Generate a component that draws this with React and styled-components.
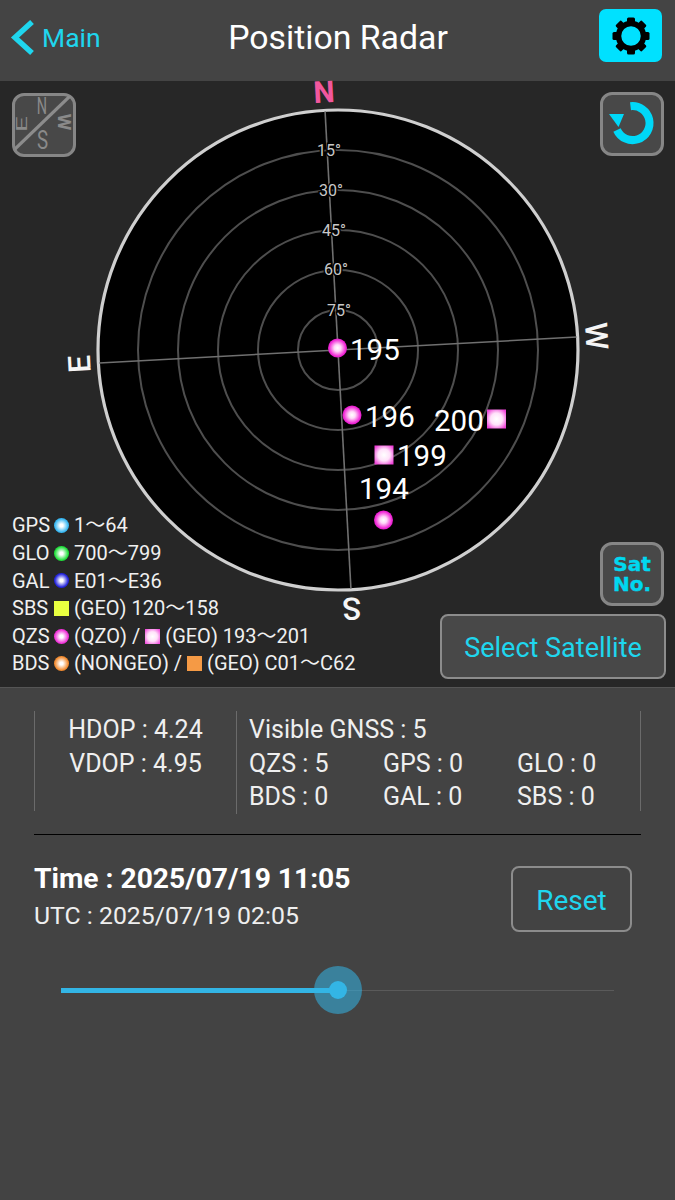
import React from "react";
import styled, { createGlobalStyle } from "styled-components";

const CYAN = "#1fd6ee";
const FONT = `Roboto, "Noto Sans CJK JP", sans-serif`;

const GlobalStyle = createGlobalStyle`
    html, body {
        margin: 0;
        padding: 0;
        background: #434343;
    }
    body {
        font-family: ${FONT};
        color: #f5f5f5;
    }
`;

// radar geometry, in svg units
const C = 269;
const TILT = -3.1;
const RINGS = [40, 80, 120, 160, 200];
const ELEVATIONS = [
    { label: "15°", x: 260, y: 69 },
    { label: "30°", x: 262, y: 109 },
    { label: "45°", x: 265, y: 149 },
    { label: "60°", x: 267, y: 188 },
    { label: "75°", x: 270, y: 229 },
];
const COMPASS = [
    { label: "N", angle: 0, color: "#f2579d", weight: 700, size: 30 },
    { label: "W", angle: 90, color: "#f5f5f5", weight: 500, size: 31 },
    { label: "S", angle: 180, color: "#f5f5f5", weight: 500, size: 31 },
    { label: "E", angle: 270, color: "#f5f5f5", weight: 500, size: 31 },
];
// x/y are the marker, tx/ty where the number starts
const SATS = [
    { id: 195, kind: "dot", x: 268.5, y: 267, tx: 281, ty: 279 },
    { id: 196, kind: "dot", x: 283, y: 334, tx: 296, ty: 346 },
    { id: 200, kind: "square", x: 427.5, y: 338, tx: 365, ty: 350 },
    { id: 199, kind: "square", x: 315, y: 374, tx: 328, ty: 385 },
    { id: 194, kind: "dot", x: 314.5, y: 439, tx: 290, ty: 418 },
];

const Radar = () => (
    <RadarSvg viewBox="0 0 538 538">
        <defs>
            <radialGradient id="qzs">
                <stop offset="0%" stopColor="#ffffff" />
                <stop offset="35%" stopColor="#ffd8f8" />
                <stop offset="85%" stopColor="#f22fd8" />
                <stop offset="100%" stopColor="#e018c8" />
            </radialGradient>
            <radialGradient id="qzsGeo" r="0.62">
                <stop offset="0%" stopColor="#ffffff" />
                <stop offset="50%" stopColor="#ffe2fa" />
                <stop offset="100%" stopColor="#f040d8" />
            </radialGradient>
        </defs>
        <circle cx={C} cy={C} r="240" fill="#000" stroke="#cfcfcf" strokeWidth="3.2" />
        {RINGS.map((r) => (
            <circle key={r} cx={C} cy={C} r={r} fill="none" stroke="#4e4e4e" strokeWidth="2" />
        ))}
        <g transform={`rotate(${TILT} ${C} ${C})`}>
            <line x1={C} y1={C - 239} x2={C} y2={C + 239} stroke="#707070" strokeWidth="1.6" />
            <line x1={C - 239} y1={C} x2={C + 239} y2={C} stroke="#707070" strokeWidth="1.6" />
        </g>
        {ELEVATIONS.map((e) => (
            <ElevationLabel key={e.label} x={e.x} y={e.y}>
                {e.label}
            </ElevationLabel>
        ))}
        {COMPASS.map((d) => (
            <g key={d.label} transform={`rotate(${TILT + d.angle} ${C} ${C})`}>
                <CompassLabel x={C} y={C - 248} fill={d.color} fontWeight={d.weight} fontSize={d.size}>
                    {d.label}
                </CompassLabel>
            </g>
        ))}
        {SATS.map((s) =>
            s.kind === "dot" ? (
                <circle key={s.id} cx={s.x} cy={s.y} r="9.5" fill="url(#qzs)" />
            ) : (
                <rect key={s.id} x={s.x - 9.5} y={s.y - 9.5} width="19" height="19" fill="url(#qzsGeo)" />
            )
        )}
        {SATS.map((s) => (
            <SatLabel key={s.id} x={s.tx} y={s.ty}>
                {s.id}
            </SatLabel>
        ))}
    </RadarSvg>
);

const CompassIcon = () => (
    <svg width="58" height="58" viewBox="0 0 58 58">
        <g fill="#8a8a8a" fontFamily="Roboto, sans-serif" textAnchor="middle">
            <text transform="translate(27 18) scale(0.6 1)" fontSize="24">N</text>
            <text transform="translate(27.5 53) scale(0.75 1)" fontSize="25">S</text>
            <text transform="translate(12 28) rotate(-90) scale(2 1)" fontSize="14">E</text>
            <text transform="translate(43 26) rotate(90)" fontSize="19" fontWeight="700">W</text>
        </g>
        <line x1="-2" y1="55" x2="55" y2="0" stroke="#8c8c8c" strokeWidth="3.2" />
    </svg>
);

const RotateIcon = () => (
    <svg width="58" height="58" viewBox="0 0 58 58">
        <path d="M27.5 11.2 A17 17 0 1 1 14 35" fill="none" stroke="#00d8f8" strokeWidth="8" />
        <path d="M6 19 L21 19 L15.5 32 Z" fill="#00d8f8" />
    </svg>
);

const GearIcon = () => (
    <svg width="38" height="38" viewBox="0 0 38 38">
        {[0, 45, 90, 135, 180, 225, 270, 315].map((a) => (
            <rect key={a} x="15" y="0.5" width="8" height="8" rx="1.5" fill="#000" transform={`rotate(${a} 19 19)`} />
        ))}
        <circle cx="19" cy="19" r="12.5" fill="none" stroke="#000" strokeWidth="5.5" />
    </svg>
);

const LEGEND = [
    { name: "GPS", color: "#35b6f2", text: "1～64" },
    { name: "GLO", color: "#1fe03a", text: "700～799" },
    { name: "GAL", color: "#2222dd", text: "E01～E36" },
    { name: "SBS", color: "#e8ff40", square: true, text: "(GEO) 120～158" },
    { name: "QZS", color: "#f030d8", text: "(QZO) /", second: "#f030d8", rest: "(GEO) 193～201" },
    { name: "BDS", color: "#f28a2e", text: "(NONGEO) /", second: "#f59a45", rest: "(GEO) C01～C62" },
];

export default function App() {
    return (
        <>
            <GlobalStyle />
            <Page>
                <Header>
                    <BackLink>
                        <svg width="24" height="38" viewBox="0 0 24 38">
                            <polyline points="22,3 5,18.5 22,34" fill="none" stroke={CYAN} strokeWidth="5.5" />
                        </svg>
                        Main
                    </BackLink>
                    <Title>Position Radar</Title>
                    <SettingsButton>
                        <GearIcon />
                    </SettingsButton>
                </Header>

                <RadarPanel>
                    <Radar />
                    <IconButton $left="12px" $top="12px">
                        <CompassIcon />
                    </IconButton>
                    <IconButton $right="11px" $top="11px">
                        <RotateIcon />
                    </IconButton>
                    <IconButton $right="11px" $top="461px">
                        <SatNo>
                            <div>Sat</div>
                            <div>No.</div>
                        </SatNo>
                    </IconButton>
                    <Legend>
                        {LEGEND.map((row) => (
                            <LegendRow key={row.name}>
                                <LegendName>{row.name}</LegendName>
                                <Marker $color={row.color} $square={row.square} />
                                <span>{row.text}</span>
                                {row.second && <SecondMarker $color={row.second} $glow={row.name === "QZS"} />}
                                {row.rest && <span>{row.rest}</span>}
                            </LegendRow>
                        ))}
                    </Legend>
                    <SelectButton>Select Satellite</SelectButton>
                </RadarPanel>

                <Details>
                    <Stats>
                        <DopColumn>
                            <div>HDOP : 4.24</div>
                            <div>VDOP : 4.95</div>
                        </DopColumn>
                        <GnssColumn>
                            <GnssTotal>Visible GNSS : 5</GnssTotal>
                            <div>QZS : 5</div>
                            <div>GPS : 0</div>
                            <div>GLO : 0</div>
                            <div>BDS : 0</div>
                            <div>GAL : 0</div>
                            <div>SBS : 0</div>
                        </GnssColumn>
                    </Stats>
                    <Divider />
                    <TimeRow>
                        <div>
                            <LocalTime>Time : 2025/07/19 11:05</LocalTime>
                            <UtcTime>UTC : 2025/07/19 02:05</UtcTime>
                        </div>
                        <ResetButton>Reset</ResetButton>
                    </TimeRow>
                    <Slider>
                        <SliderFill style={{ width: "50%" }} />
                        <SliderHalo style={{ left: "50%" }} />
                        <SliderThumb style={{ left: "50%" }} />
                    </Slider>
                </Details>
            </Page>
        </>
    );
}

const Page = styled.div`
    width: 675px;
    height: 1200px;
    overflow: hidden;
    background: #434343;
`;

const Header = styled.header`
    height: 81px;
    box-sizing: border-box;
    padding: 0 13px 6px 10px;
    display: grid;
    grid-template-columns: 1fr auto 1fr;
    align-items: center;
    background: #444444;
`;

const BackLink = styled.div`
    display: flex;
    align-items: center;
    gap: 8px;
    font-size: 26.5px;
    color: ${CYAN};
`;

const Title = styled.h1`
    margin: 0;
    padding-left: 4px;
    font-size: 33.8px;
    font-weight: 400;
    color: #ffffff;
`;

const SettingsButton = styled.div`
    justify-self: end;
    align-self: start;
    width: 63px;
    height: 53px;
    margin-top: 9px;
    border-radius: 7px;
    background: #00e1ff;
    display: flex;
    align-items: center;
    justify-content: center;
`;

const RadarPanel = styled.section`
    position: relative;
    height: 606px;
    display: flex;
    justify-content: center;
    align-items: flex-start;
    background: #272727;
`;

const RadarSvg = styled.svg`
    display: block;
    width: 538px;
    height: 538px;
    overflow: visible;
    font-family: Roboto, sans-serif;
`;

const ElevationLabel = styled.text`
    font-size: 16px;
    fill: #c8c8c8;
    text-anchor: middle;
    dominant-baseline: central;
    paint-order: stroke;
    stroke: #000;
    stroke-width: 3px;
`;

const CompassLabel = styled.text`
    text-anchor: middle;
`;

const SatLabel = styled.text`
    font-size: 29.5px;
    fill: #ffffff;
`;

const IconButton = styled.div`
    position: absolute;
    top: ${(props) => props.$top};
    left: ${(props) => props.$left || "auto"};
    right: ${(props) => props.$right || "auto"};
    width: 58px;
    height: 58px;
    border: 3px solid #868686;
    border-radius: 12px;
    background: #484848;
    display: flex;
    align-items: center;
    justify-content: center;
`;

const SatNo = styled.div`
    font-family: "DejaVu Sans", sans-serif;
    font-weight: 700;
    font-size: 20px;
    line-height: 20px;
    text-align: center;
    color: #00d8f0;
    -webkit-text-stroke: 0.4px #00d8f0;
`;

const Legend = styled.div`
    position: absolute;
    left: 12px;
    bottom: 9px;
    font-size: 20px;
    line-height: 27.6px;
    color: #f0f0f0;
`;

const LegendRow = styled.div`
    display: flex;
    align-items: center;
    gap: 5px;
    white-space: nowrap;
`;

const LegendName = styled.span`
    width: 37px;
`;

const Marker = styled.i`
    display: block;
    flex: none;
    width: 15px;
    height: 15px;
    margin-top: -1px;
    border-radius: ${(props) => (props.$square ? "0" : "50%")};
    background: ${(props) =>
        props.$square
            ? props.$color
            : `radial-gradient(circle closest-side, #ffffff 0%, #ffffff 20%, ${props.$color} 90%)`};
`;

const SecondMarker = styled(Marker)`
    border-radius: 0;
    background: ${(props) =>
        props.$glow ? `radial-gradient(circle, #ffffff 0%, #ffe2fa 45%, ${props.$color} 100%)` : props.$color};
`;

const SelectButton = styled.button`
    position: absolute;
    left: 440px;
    bottom: 8px;
    width: 226px;
    height: 65px;
    padding-top: 3px;
    border: 2px solid #8c8c8c;
    border-radius: 8px;
    background: #484848;
    color: ${CYAN};
    font-family: ${FONT};
    font-size: 27px;
`;

const Details = styled.section`
    box-sizing: border-box;
    padding: 23px 34px 0;
    border-top: 1px solid #555555;
`;

const Stats = styled.div`
    height: 100px;
    display: grid;
    grid-template-columns: 202px 1fr;
    border-left: 1px solid #6b6b6b;
    border-right: 1px solid #6b6b6b;
    font-size: 25px;
    line-height: 33.5px;
    color: #efefef;
`;

const DopColumn = styled.div`
    text-align: center;
    padding-top: 2px;
    border-right: 1px solid #6b6b6b;
`;

const GnssColumn = styled.div`
    display: grid;
    grid-template-columns: repeat(3, 134px);
    grid-auto-rows: 33.5px;
    align-content: start;
    padding: 2px 0 0 12px;
`;

const GnssTotal = styled.div`
    grid-column: 1 / -1;
`;

const Divider = styled.hr`
    margin: 23px 0 0;
    border: none;
    height: 1px;
    background: #000000;
`;

const TimeRow = styled.div`
    display: flex;
    justify-content: space-between;
    align-items: flex-start;
    padding: 26px 9px 0 0;
`;

const LocalTime = styled.div`
    font-size: 28.2px;
    font-weight: 700;
    line-height: 36px;
    color: #ffffff;
`;

const UtcTime = styled.div`
    font-size: 24.8px;
    line-height: 37px;
    color: #efefef;
`;

const ResetButton = styled.button`
    width: 121px;
    height: 66px;
    margin-top: 5px;
    padding-top: 3px;
    border: 2px solid #8c8c8c;
    border-radius: 8px;
    background: transparent;
    color: ${CYAN};
    font-family: ${FONT};
    font-size: 28px;
`;

const Slider = styled.div`
    position: relative;
    height: 1px;
    margin: 56px 27px 0;
    background: #5a5a5a;
`;

const SliderFill = styled.div`
    position: absolute;
    left: 0;
    top: -2px;
    height: 5px;
    background: #33b5e5;
`;

const SliderHalo = styled.div`
    position: absolute;
    top: -24px;
    width: 48px;
    height: 48px;
    margin-left: -24px;
    border-radius: 50%;
    background: rgba(51, 181, 229, 0.55);
`;

const SliderThumb = styled.div`
    position: absolute;
    top: -9px;
    width: 18px;
    height: 18px;
    margin-left: -9px;
    border-radius: 50%;
    background: #33b5e5;
`;
